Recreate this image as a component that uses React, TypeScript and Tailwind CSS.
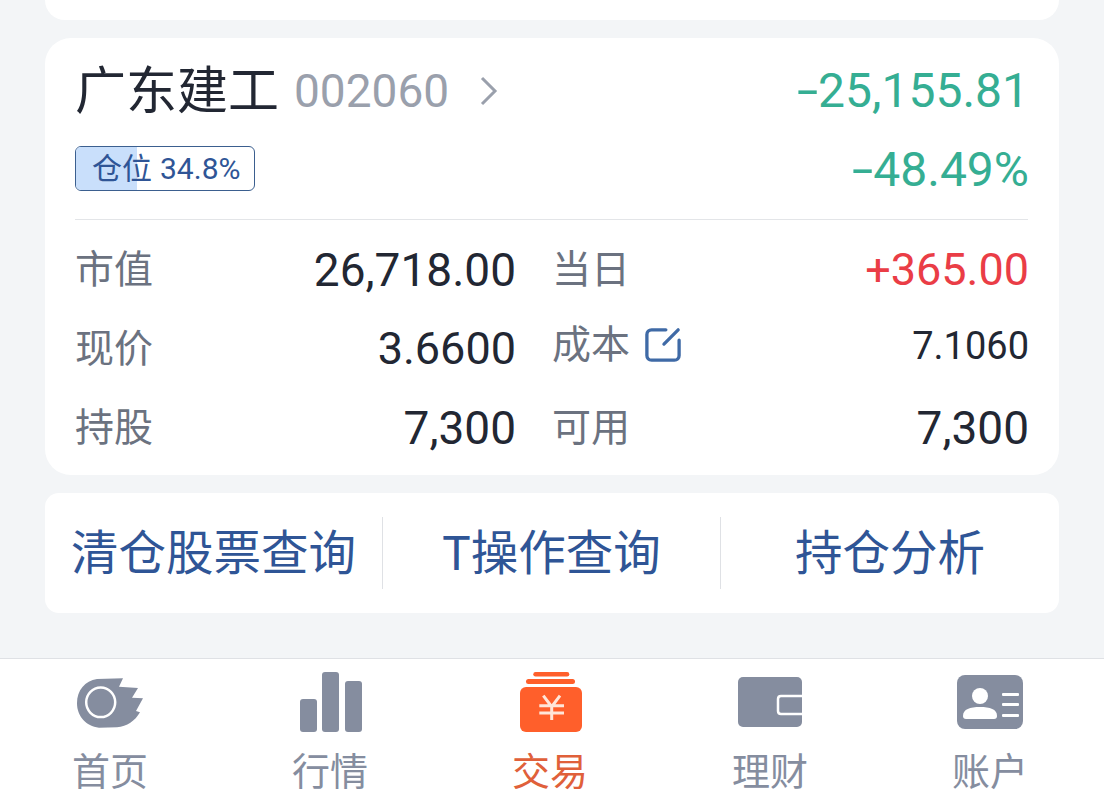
import React from "react";

const font = "font-['Roboto','Noto_Sans_CJK_SC',sans-serif]";

function Minus() {
  return <span className="inline-block scale-x-[1.6] origin-right ml-[6px]">-</span>;
}

function Row({ label, value, valueClass = "text-[46px] text-[#222733]", labelClass = "mt-[1px]", extra }: { label: string; value: string; valueClass?: string; labelClass?: string; extra?: React.ReactNode }) {
  return (
    <div className="flex items-center justify-between h-[79px]">
      <div className={`flex items-center ${labelClass}`}>
        <span className="text-[39px] text-[#6b7280] leading-none">{label}</span>
        {extra}
      </div>
      <span className={`leading-none -mr-px ${valueClass}`}>{value}</span>
    </div>
  );
}

function HomeIcon() {
  return (
    <svg className="mt-[2px]" width="66" height="50" viewBox="0 0 66 50">
      <path
        d="M46 0.3L42 8.7L61 10L55 19.7L66 20.3L59 33L63 34.3C58 43 50 48.5 40 49.3L22 49.7C9 48.5 0 38 0 25.3C0 12 8 3 20 1Z"
        fill="#858d9f"
      />
      <ellipse cx="23.7" cy="24.3" rx="14.5" ry="14.8" fill="none" stroke="#fff" strokeWidth="2.5" />
    </svg>
  );
}

function BarsIcon() {
  return (
    <svg className="ml-[2px]" width="62" height="60" viewBox="0 0 62 60">
      <rect x="0" y="27" width="17" height="33" rx="3" fill="#858d9f" />
      <rect x="22" y="0" width="17" height="60" rx="3" fill="#858d9f" />
      <rect x="45" y="9" width="17" height="51" rx="3" fill="#858d9f" />
    </svg>
  );
}

function TradeIcon() {
  return (
    <svg className="ml-[2px]" width="62" height="60" viewBox="0 0 62 60">
      <rect x="13.3" y="0" width="36" height="4.5" rx="2.2" fill="#ff5f2b" />
      <rect x="6" y="7" width="49" height="5" rx="2.5" fill="#ff5f2b" />
      <rect x="0" y="15" width="62" height="45" rx="6" fill="#ff5f2b" />
      <path d="M23.3 23.7L31.7 34.7L40 23.7M19.3 33.7H44M19.3 41H44M31.7 34V48" fill="none" stroke="#ffe6d9" strokeWidth="3" />
    </svg>
  );
}

function WalletIcon() {
  return (
    <svg width="64" height="50" viewBox="0 0 64 50">
      <rect x="0" y="0" width="64" height="50" rx="5" fill="#858d9f" />
      <path d="M64 19H43C41 19 40 20 40 22V34C40 36 41 37 43 37H64" fill="none" stroke="#fff" strokeWidth="2.5" />
    </svg>
  );
}

function AccountIcon() {
  return (
    <svg width="66" height="54" viewBox="0 0 66 54">
      <rect x="0" y="0" width="66" height="54" rx="8" fill="#858d9f" />
      <circle cx="23" cy="21" r="8" fill="#fff" />
      <path d="M6 41C6 34 13 32 23 32C33 32 40 34 40 41C40 43 39 44 37 44H9C7 44 6 43 6 41Z" fill="#fff" />
      <rect x="45" y="18" width="17" height="3" rx="1" fill="#fff" />
      <rect x="45" y="28" width="17" height="3" rx="1" fill="#fff" />
      <rect x="45" y="39" width="17" height="3" rx="1" fill="#fff" />
    </svg>
  );
}

function NavItem({ icon, label, active }: { icon: React.ReactNode; label: string; active?: boolean }) {
  return (
    <div className="flex flex-col items-center">
      <div className="h-[86px] flex items-center justify-center">{icon}</div>
      <span className={`text-[38px] leading-[50px] mt-[2px] ${active ? "text-[#e0603a]" : "text-[#858d9f]"}`}>{label}</span>
    </div>
  );
}

export default function App() {
  return (
    <div className={`${font} w-[1104px] h-[808px] bg-[#f3f5f7] flex flex-col overflow-hidden`}>
      <div className="px-[45px]">
        <div className="h-[20px] bg-white rounded-b-[26px]" />
        <div className="mt-[18px] h-[437px] bg-white rounded-[26px] pl-[30px] pr-[31px]">
          <div className="flex justify-between h-[106px] pt-[26px]">
            <div className="flex items-center h-[54px]">
              <span className="text-[51px] leading-none text-[#222733]">广东建工</span>
              <span className="text-[46px] leading-none text-[#9aa0ac] ml-[15px]">002060</span>
              <svg className="ml-[30px]" width="20" height="30" viewBox="0 0 20 30">
                <path d="M3 2L16 15L3 28" fill="none" stroke="#9aa0ac" strokeWidth="3" />
              </svg>
            </div>
            <span className="text-[48px] leading-[54px] text-[#35ae93] -mr-px"><Minus />25,155.81</span>
          </div>
          <div className="flex justify-between items-start h-[76px] border-b border-[#e3e5e8]">
            <div className="relative w-[180px] h-[45px] mt-[2px] pt-[1px] rounded-[6px] border border-[#3b5f8f] overflow-hidden flex items-center text-[#2f5596]">
              <div className="absolute left-0 top-0 bottom-0 w-[61px] bg-[#c9dffb]" />
              <span className="relative ml-[16px] text-[30px] leading-none">仓位</span>
              <span className="relative ml-[8px] text-[30px] leading-none">34.8%</span>
            </div>
            <span className="text-[48px] leading-[54px] text-[#35ae93] -mt-[1px] -mr-px"><Minus />48.49%</span>
          </div>
          <div className="grid grid-cols-[440px_476px] gap-x-[37px] pt-[10px]">
            <div>
              <Row label="市值" value="26,718.00" />
              <Row label="现价" value="3.6600" valueClass="text-[45px] text-[#222733]" />
              <Row label="持股" value="7,300" />
            </div>
            <div>
              <Row label="当日" value="+365.00" valueClass="text-[45px] text-[#ea3d46]" />
              <Row
                label="成本"
                labelClass="mb-[6px]"
                value="7.1060"
                valueClass="text-[38px] text-[#222733] mb-[6px]"
                extra={
                  <svg className="ml-[15px] mb-[2px]" width="36" height="38" viewBox="0 0 38 38">
                    <path d="M36 14V30C36 33 34 35 31 35H7C4 35 2 33 2 30V8C2 5 4 3 7 3H22M35 3L20 18" fill="none" stroke="#3f6aa6" strokeWidth="3.5" strokeLinecap="round" />
                  </svg>
                }
              />
              <Row label="可用" value="7,300" />
            </div>
          </div>
        </div>
        <div className="mt-[18px] h-[120px] bg-white rounded-[14px] flex items-center text-[47.5px] text-[#2f5596]">
          <div className="w-[338px] h-[72px] pt-[3px] flex items-center justify-center border-r border-[#dfe1e5] leading-none">清仓股票查询</div>
          <div className="w-[338px] h-[72px] pt-[3px] flex items-center justify-center border-r border-[#dfe1e5] leading-none">T操作查询</div>
          <div className="flex-1 h-[72px] pt-[3px] flex items-center justify-center leading-none">持仓分析</div>
        </div>
      </div>
      <div className="mt-[45px] flex-1 bg-white border-t border-[#dfe1e5] grid grid-cols-[repeat(5,220px)]">
        <NavItem icon={<HomeIcon />} label="首页" />
        <NavItem icon={<BarsIcon />} label="行情" />
        <NavItem icon={<TradeIcon />} label="交易" active />
        <NavItem icon={<WalletIcon />} label="理财" />
        <NavItem icon={<AccountIcon />} label="账户" />
      </div>
    </div>
  );
}
